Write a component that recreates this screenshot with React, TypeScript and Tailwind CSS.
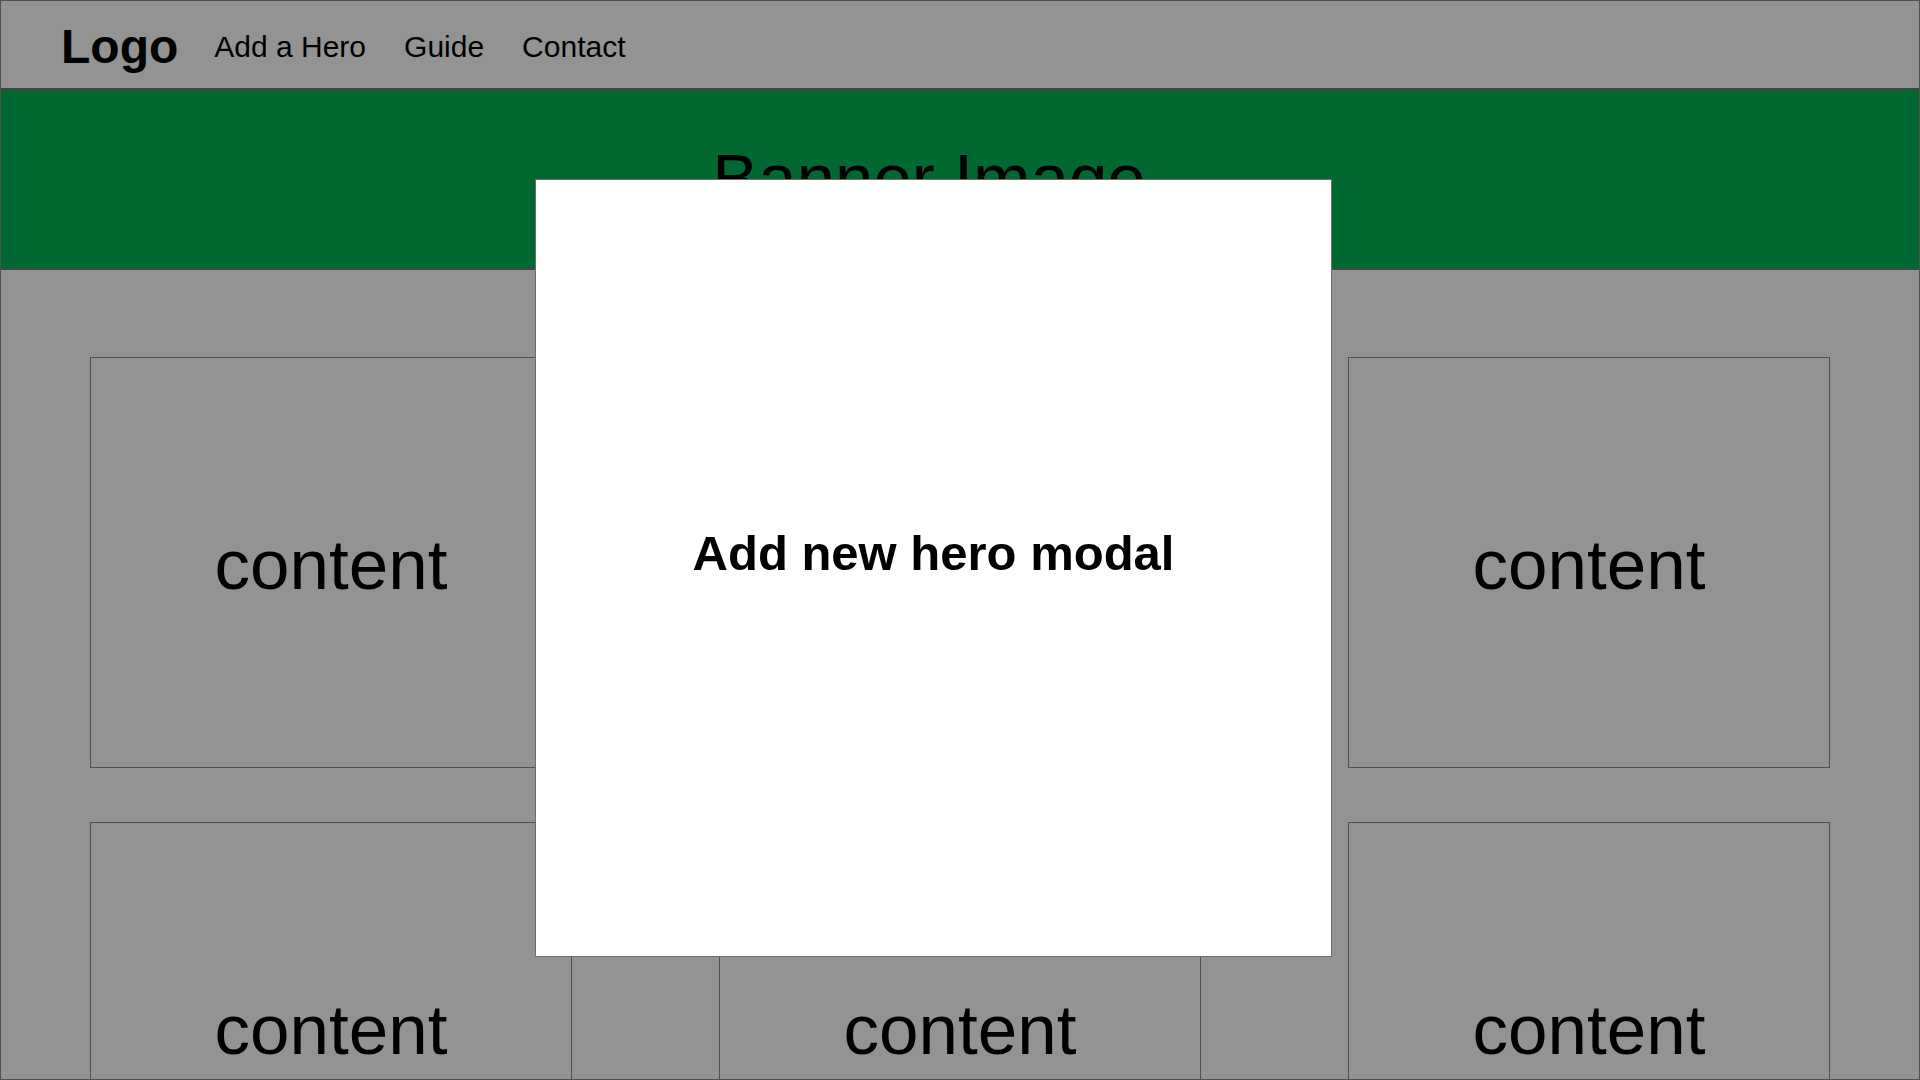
const navLinks = ["Add a Hero", "Guide", "Contact"];

const cards = Array.from({ length: 6 }, (_, index) => index);

export default function App() {
  return (
    <div
      className="relative h-[1080px] w-[1920px] overflow-hidden border border-[#505050] bg-[#939393] text-black"
      style={{ fontFamily: '"Liberation Sans", Arial, Helvetica, sans-serif' }}
    >
      <header className="flex h-[89px] items-center gap-[36px] border-b-2 border-[#444444] pl-[60px] pt-[4px]">
        <div className="text-[48px] font-bold leading-none">Logo</div>
        <nav className="flex items-center gap-[38px] text-[30px] leading-none">
          {navLinks.map((link) => (
            <a key={link} className="cursor-pointer">
              {link}
            </a>
          ))}
        </nav>
      </header>

      <section className="flex h-[180px] items-center justify-center border-b-2 border-[#444444] bg-[#006830] pr-[62px]">
        <h1 className="text-[69px] font-normal">Banner Image</h1>
      </section>

      <main className="grid grid-cols-[482px_482px_482px] gap-x-[147px] gap-y-[54px] px-[89px] pt-[87px]">
        {cards.map((card) => (
          <div
            key={card}
            className="flex h-[411px] items-center justify-center border border-[#505050] pt-[5px]"
          >
            <span className="text-[71px]">content</span>
          </div>
        ))}
      </main>

      {/* modal sits over the page */}
      <div className="absolute left-[534px] top-[178px] flex h-[778px] w-[797px] items-center justify-center border border-[#6e6e6e] bg-white pb-[29px]">
        <h2 className="text-[49px] font-bold">Add new hero modal</h2>
      </div>
    </div>
  );
}
